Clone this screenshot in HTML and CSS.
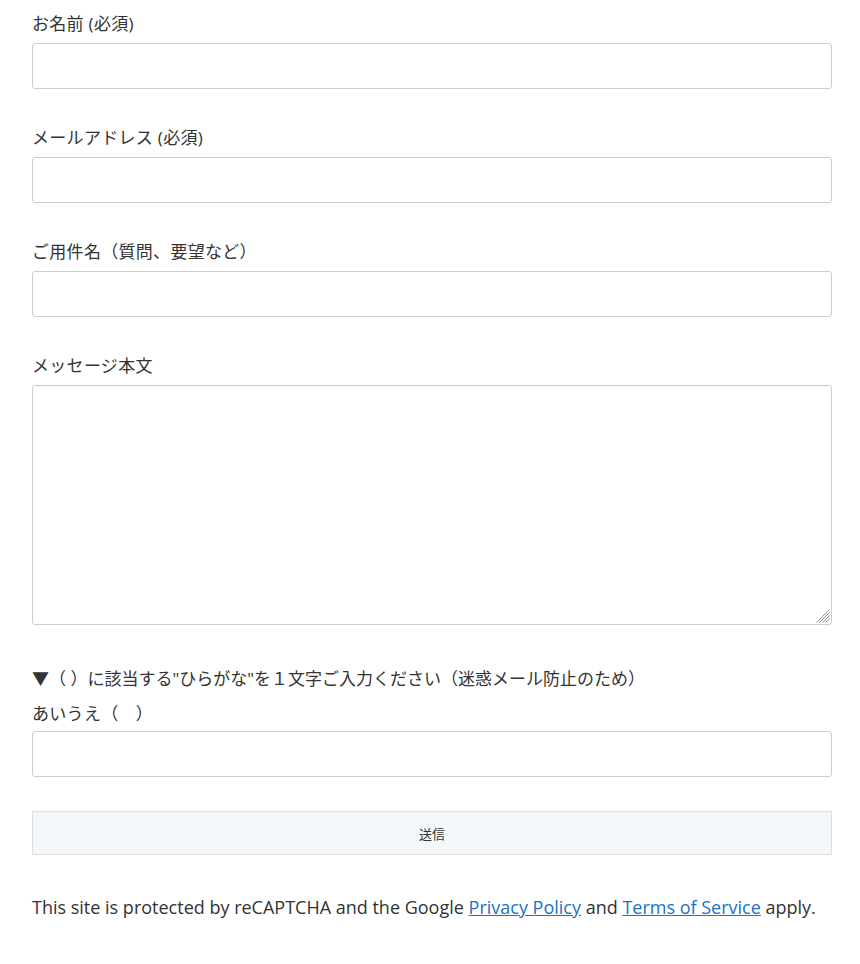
FILE: index.html
```html
<!DOCTYPE html>
<html lang="ja">
<head>
<meta charset="utf-8">
<title>お問い合わせ</title>
<link rel="stylesheet" href="styles.css">
</head>
<body>
<form class="contact-form">
  <div class="field">
    <label class="field-label" for="name">お名前 (必須)</label>
    <input class="field-input" id="name" type="text">
  </div>
  <div class="field">
    <label class="field-label" for="email">メールアドレス (必須)</label>
    <input class="field-input" id="email" type="email">
  </div>
  <div class="field">
    <label class="field-label" for="subject">ご用件名（質問、要望など）</label>
    <input class="field-input" id="subject" type="text">
  </div>
  <div class="field">
    <label class="field-label" for="message">メッセージ本文</label>
    <div class="textarea-wrap">
      <textarea class="field-textarea" id="message"></textarea>
      <svg class="resize-grip" width="14" height="14" viewBox="0 0 14 14" aria-hidden="true">
        <g stroke="#8c8c8c" stroke-width="1">
          <line x1="13.5" y1="0.5" x2="0.5" y2="13.5"/>
          <line x1="13.5" y1="3.5" x2="3.5" y2="13.5"/>
          <line x1="13.5" y1="6.5" x2="6.5" y2="13.5"/>
          <line x1="13.5" y1="9.5" x2="9.5" y2="13.5"/>
        </g>
      </svg>
    </div>
  </div>
  <div class="field field-quiz">
    <p class="quiz-note">▼（ ）に該当する"ひらがな"を１文字ご入力ください（迷惑メール防止のため）</p>
    <label class="field-label quiz-label" for="quiz">あいうえ（　）</label>
    <input class="field-input" id="quiz" type="text">
  </div>
  <button class="submit-btn" type="button">送信</button>
  <p class="recaptcha-note">This site is protected by reCAPTCHA and the Google <a href="#">Privacy Policy</a> and <a href="#">Terms of Service</a> apply.</p>
</form>
</body>
</html>
```
FILE: styles.css
```css
html, body {
  margin: 0;
  padding: 0;
  background: #fff;
}
body {
  font-family: "Open Sans", "Noto Sans CJK JP", sans-serif;
  color: #333;
  font-size: 17px;
}
.contact-form {
  width: 800px;
  padding: 9px 0 0 32px;
  display: flex;
  flex-direction: column;
}
.field {
  display: flex;
  flex-direction: column;
  margin-bottom: 34px;
}
.field-label {
  line-height: 30px;
  height: 30px;
  margin-bottom: 4px;
  letter-spacing: 0.3px;
}
.field-input {
  box-sizing: border-box;
  width: 800px;
  height: 46px;
  border: 1px solid #ccc;
  border-radius: 3px;
  margin: 0;
  font-size: 17px;
  padding: 0 10px;
  background: #fff;
}
.textarea-wrap {
  position: relative;
  width: 800px;
  height: 240px;
}
.field-textarea {
  display: block;
  box-sizing: border-box;
  width: 800px;
  height: 240px;
  border: 1px solid #ccc;
  border-radius: 3px;
  margin: 0;
  font-size: 17px;
  padding: 8px 10px;
  background: #fff;
  resize: none;
}
.resize-grip {
  position: absolute;
  right: 2px;
  bottom: 2px;
  pointer-events: none;
}
.field-quiz {
  margin-top: 5px;
}
.quiz-note {
  margin: 0;
  line-height: 30px;
  height: 30px;
  margin-bottom: 5px;
}
.quiz-label {
  margin-bottom: 2px;
}
.submit-btn {
  box-sizing: border-box;
  width: 800px;
  height: 44px;
  background: #f4f7fa;
  border: 1px solid #dcdfe3;
  border-radius: 0;
  font-family: "Noto Sans CJK JP", sans-serif;
  font-size: 13px;
  color: #333;
  margin: 0;
  padding: 0;
}
.recaptcha-note {
  margin: 37px 0 0;
  line-height: 30px;
  font-size: 18px;
  white-space: nowrap;
}
.recaptcha-note a {
  color: #1a73c8;
  text-decoration: underline;
}
```
